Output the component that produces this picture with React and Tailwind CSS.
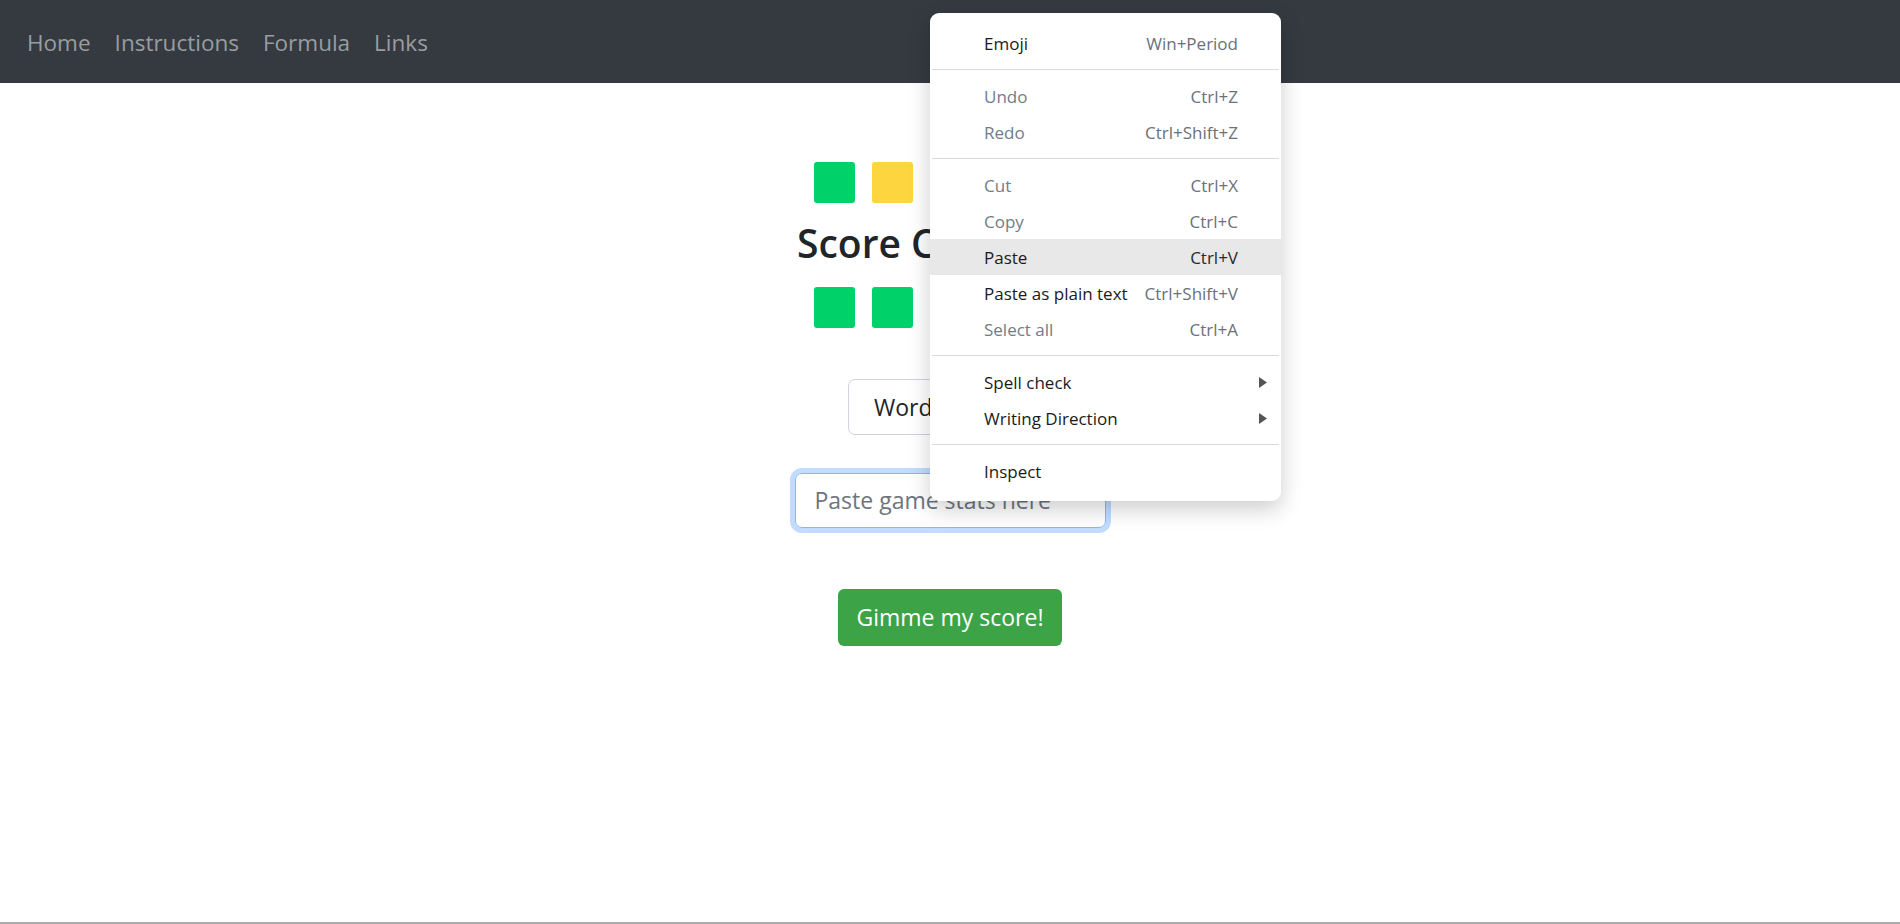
import React from "react";

const navLinks = ["Home", "Instructions", "Formula", "Links"];

const rows = [
  ["g", "y", "n", "n", "g"],
  ["g", "g", "g", "g", "g"],
];

const tileColor = {
  g: "bg-[#00d26a]",
  y: "bg-[#fcd53f]",
  n: "bg-[#9b9b9b]",
};

// context menu entries, "sep" draws a divider
const menu = [
  { label: "Emoji", key: "Win+Period" },
  "sep",
  { label: "Undo", key: "Ctrl+Z", off: true },
  { label: "Redo", key: "Ctrl+Shift+Z", off: true },
  "sep",
  { label: "Cut", key: "Ctrl+X", off: true },
  { label: "Copy", key: "Ctrl+C", off: true },
  { label: "Paste", key: "Ctrl+V", hover: true },
  { label: "Paste as plain text", key: "Ctrl+Shift+V" },
  { label: "Select all", key: "Ctrl+A", off: true },
  "sep",
  { label: "Spell check", sub: true },
  { label: "Writing Direction", sub: true },
  "sep",
  { label: "Inspect" },
];

function TileRow({ tiles }) {
  return (
    <div className="flex gap-[17px]">
      {tiles.map((t, i) => (
        <div key={i} className={`w-[41px] h-[41px] rounded-[3px] ${tileColor[t]}`} />
      ))}
    </div>
  );
}

function ContextMenu() {
  return (
    <div className="absolute left-[930px] top-[13px] w-[351px] bg-white rounded-[9px] py-[12px] shadow-[0_8px_22px_rgba(0,0,0,0.2)] font-['Open_Sans',sans-serif] text-[17px]">
      {menu.map((item, i) => {
        if (item === "sep") {
          return <div key={i} className="h-px bg-[#dadada] mx-[2px] my-[8px]" />;
        }
        return (
          <div
            key={i}
            className={`h-[36px] flex items-center pt-[2px] pl-[54px] pr-[13px] ${item.hover ? "bg-[#e8e8e8]" : ""}`}
          >
            <span className={`flex-1 ${item.off ? "text-[#727c88]" : "text-[#1b1b1b]"}`}>{item.label}</span>
            {item.key && (
              <span className={`mr-[30px] ${item.hover ? "text-[#2a2a2a]" : "text-[#6a717a]"}`}>{item.key}</span>
            )}
            {item.sub && (
              <svg width="9" height="11" viewBox="0 0 9 11" className="-mt-[2px]">
                <path d="M0 0 L8 5.5 L0 11 Z" fill="#555" />
              </svg>
            )}
          </div>
        );
      })}
    </div>
  );
}

export default function App() {
  return (
    <div className="relative w-full h-[924px] flex flex-col bg-white font-['Open_Sans',sans-serif] overflow-hidden">
      <nav className="h-[83px] bg-[#343a40] flex items-center pt-[3px] px-[15px]">
        {navLinks.map((l) => (
          <a key={l} href="#" className="px-[12px] text-[22.5px] text-[#9a9da0]">
            {l}
          </a>
        ))}
      </nav>

      <main className="flex-1 flex flex-col items-center pt-[79px]">
        <TileRow tiles={rows[0]} />
        <h3 className="mt-[10px] mb-[14px] text-[39px] leading-[60px] font-semibold text-[#212529]">Score Calculator</h3>
        <TileRow tiles={rows[1]} />

        <div className="mt-[51px] w-[204px] h-[56px] border border-[#ced4da] rounded-[7px] flex items-center pl-[25px] text-[23px] text-[#212529]">
          Wordle
        </div>

        <div className="mt-[38px] w-[311px] h-[55px] border border-[#86b7fe] rounded-[7px] shadow-[0_0_0_5px_rgba(13,110,253,0.25)] flex items-center pl-[19px] text-[23px] text-[#6c757d]">
          Paste game stats here
        </div>

        <button className="mt-[61px] w-[224px] h-[57px] bg-[#3ca446] rounded-[6px] text-white text-[23px]">
          Gimme my score!
        </button>
      </main>

      <div className="h-[2px] bg-[#ababab]" />

      <ContextMenu />
    </div>
  );
}
